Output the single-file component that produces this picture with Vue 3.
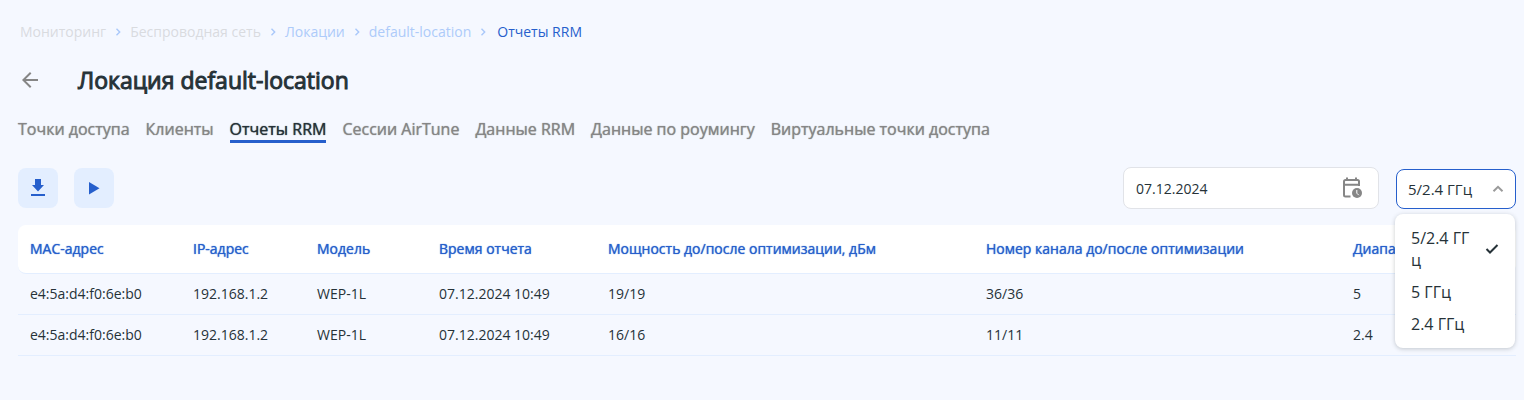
<script setup>
    import { ref } from "vue"
    const crumbs = [
        { title: 'Мониторинг', type: 'muted' },
        { title: 'Беспроводная сеть', type: 'muted' },
        { title: 'Локации', type: 'link' },
        { title: 'default-location', type: 'link' },
        { title: 'Отчеты RRM', type: 'current' },
    ]
    const tabs = ['Точки доступа', 'Клиенты', 'Отчеты RRM', 'Сессии AirTune', 'Данные RRM', 'Данные по роумингу', 'Виртуальные точки доступа']
    const activeTab = ref('Отчеты RRM')

    const columns = [
        { title: 'MAC-адрес', key: 'mac', width: 163 },
        { title: 'IP-адрес', key: 'ip', width: 124 },
        { title: 'Модель', key: 'model', width: 122 },
        { title: 'Время отчета', key: 'time', width: 169 },
        { title: 'Мощность до/после оптимизации, дБм', key: 'power', width: 378 },
        { title: 'Номер канала до/после оптимизации', key: 'channel', width: 367 },
        { title: 'Диапазон', key: 'band', width: 175 },
    ]
    const rows = [
        { mac: 'e4:5a:d4:f0:6e:b0', ip: '192.168.1.2', model: 'WEP-1L', time: '07.12.2024 10:49', power: '19/19', channel: '36/36', band: '5' },
        { mac: 'e4:5a:d4:f0:6e:b0', ip: '192.168.1.2', model: 'WEP-1L', time: '07.12.2024 10:49', power: '16/16', channel: '11/11', band: '2.4' },
    ]

    const date = ref('07.12.2024')
    const bands = ['5/2.4 ГГц', '5 ГГц', '2.4 ГГц']
    const band = ref('5/2.4 ГГц')
    const opened = ref(true)
    function selectBand(item) {
        band.value = item
        opened.value = false
    }
</script>

<template>
    <div class="page">
        <nav class="crumbs" aria-label="Навигация">
            <template v-for="(crumb, index) in crumbs" :key="crumb.title">
                <svg v-if="index > 0" class="chevron" viewBox="0 0 8 8">
                    <path d="M2.500 0.800 5.700 4 2.500 7.200" />
                </svg>
                <a href="#" class="crumb" :class="crumb.type">{{ crumb.title }}</a>
            </template>
        </nav>

        <header class="header">
            <button class="back" aria-label="Назад">
                <svg viewBox="0 0 24 24">
                    <path d="M20 11H7.83l5.59-5.59L12 4l-8 8 8 8 1.41-1.41L7.83 13H20v-2z" />
                </svg>
            </button>
            <h1 class="title">Локация default-location</h1>
        </header>

        <nav class="tabs">
            <a v-for="tab in tabs" :key="tab" href="#" class="tab" :class="{ active: tab === activeTab }"
                @click.prevent="activeTab = tab">{{ tab }}</a>
        </nav>

        <div class="toolbar">
            <button class="action" aria-label="Скачать">
                <svg viewBox="0 0 24 24">
                    <path d="M9 3h6v6h3l-6 6.500L6 9h3z" />
                    <path d="M5 18h14v2H5z" />
                </svg>
            </button>
            <button class="action" aria-label="Запустить">
                <svg viewBox="0 0 24 24">
                    <path d="M7 6v12.400L17.500 12.200z" />
                </svg>
            </button>
            <div class="filters">
                <label class="date">
                    <input v-model="date" type="text" aria-label="Дата">
                    <svg viewBox="0 0 24 24">
                        <path class="line" d="M10.500 20.500H5.500Q4 20.500 4 19V5.500Q4 4 5.500 4H17.500Q19 4 19 5.500V10M4 8.800H19M7 4V1.500M16 4V1.500" />
                        <circle cx="17" cy="17" r="5" />
                        <path class="hand" d="M16.800 14v3.200l2 2" />
                    </svg>
                </label>
                <div class="band">
                    <select v-model="band" aria-label="Диапазон" @mousedown.prevent="opened = !opened">
                        <option v-for="item in bands" :key="item">{{ item }}</option>
                    </select>
                    <svg class="arrow" viewBox="0 0 12 12">
                        <path d="M1.500 8.200 6 3.800l4.500 4.400" />
                    </svg>
                    <div v-if="opened" class="menu">
                        <button v-for="item in bands" :key="item" class="option" @click="selectBand(item)">
                            <span>{{ item }}</span>
                            <svg v-if="item === band" viewBox="0 0 14 14">
                                <path d="M1.500 7 5 10.500 12.500 3" />
                            </svg>
                        </button>
                    </div>
                </div>
            </div>
        </div>

        <table class="table">
            <colgroup>
                <col v-for="col in columns" :key="col.key" :style="{ width: col.width + 'px' }">
            </colgroup>
            <thead>
                <tr>
                    <th v-for="col in columns" :key="col.key">{{ col.title }}</th>
                </tr>
            </thead>
            <tbody>
                <tr v-for="(row, index) in rows" :key="index">
                    <td v-for="col in columns" :key="col.key">{{ row[col.key] }}</td>
                </tr>
            </tbody>
        </table>
    </div>
</template>

<style>
    body {
        background-color: #f5f8ff;
    }
</style>

<style scoped>
    .page {
        padding: 22px 8px 44px 18px;
        font-family: "Open Sans", "Noto Sans", sans-serif;
        font-size: 14px;
        line-height: 20px;
        color: #263238;
    }

    button,
    input,
    select {
        font: inherit;
        color: inherit;
        border: none;
        outline: none;
        margin: 0;
        padding: 0;
    }

    button {
        background: none;
        cursor: pointer;
    }

    a {
        text-decoration: none;
    }

    .crumbs {
        display: flex;
        align-items: center;
        gap: 8px;
        padding-left: 2px;
    }

    .crumb.muted {
        color: #d9dbdf;
    }

    .crumb.link {
        color: #adcbfa;
    }

    .crumb.current {
        color: #265fcc;
        padding-left: 2px;
    }

    .chevron {
        width: 8px;
        height: 8px;
        fill: none;
        stroke: #a9c8fa;
        stroke-width: 1.4;
    }

    .header {
        display: flex;
        align-items: center;
        gap: 48px;
        margin-top: 20px;
    }

    .back {
        width: 12px;
        height: 24px;
        display: flex;
    }

    .back svg {
        flex: none;
        width: 24px;
        height: 24px;
        fill: #868686;
    }

    .title {
        margin: 0;
        font-size: 23px;
        line-height: 36px;
        font-weight: 400;
        -webkit-text-stroke: 1px currentColor;
    }

    .tabs {
        display: flex;
        gap: 16px;
        margin-top: 18px;
        font-size: 16px;
        line-height: 22px;
    }

    .tab {
        padding-top: 2px;
        color: #868686;
        text-shadow: 0 0 1px currentColor;
        border-bottom: 3px solid transparent;
    }

    .tab.active {
        color: #263238;
        border-color: #265fcc;
    }

    .toolbar {
        display: flex;
        align-items: center;
        gap: 16px;
        margin-top: 24px;
    }

    .action {
        display: flex;
        align-items: center;
        justify-content: center;
        width: 40px;
        height: 40px;
        border-radius: 8px;
        background-color: #e3eeff;
    }

    .action svg {
        width: 24px;
        height: 24px;
        fill: #265fcc;
    }

    .filters {
        display: flex;
        align-items: center;
        gap: 17px;
        margin-left: auto;
    }

    .date {
        box-sizing: border-box;
        display: flex;
        align-items: center;
        width: 256px;
        height: 42px;
        padding: 0 14px 0 12px;
        border: 1px solid #e1e3e8;
        border-radius: 8px;
        background-color: #fff;
    }

    .date input {
        flex: 1;
        min-width: 0;
        padding-top: 2px;
        background: none;
    }

    .date svg {
        width: 24px;
        height: 24px;
        fill: #868686;
    }

    .date .line {
        fill: none;
        stroke: #868686;
        stroke-width: 2;
    }

    .date .hand {
        fill: none;
        stroke: #fff;
        stroke-width: 1;
    }

    .band {
        position: relative;
        width: 120px;
        margin-top: 2px;
    }

    .band select {
        appearance: none;
        display: block;
        width: 100%;
        height: 40px;
        padding: 0 32px 0 11px;
        border: 1px solid #265fcc;
        border-radius: 8px;
        background-color: #fff;
        font-size: 15px;
    }

    .arrow {
        position: absolute;
        top: 14px;
        right: 12px;
        width: 12px;
        height: 12px;
        fill: none;
        stroke: #9a9a9a;
        stroke-width: 2;
        pointer-events: none;
    }

    .menu {
        position: absolute;
        z-index: 1;
        top: 45px;
        left: -1px;
        right: 1px;
        padding: 8px 0;
        border-radius: 8px;
        background-color: #fff;
        box-shadow: 0 1px 4px rgba(38, 50, 56, 0.25);
    }

    .option {
        display: flex;
        align-items: center;
        justify-content: space-between;
        width: 100%;
        padding: 5px 16px;
        font-size: 16px;
        line-height: 22px;
        text-align: left;
    }

    .option span {
        min-width: 0;
        word-break: break-all;
    }

    .option svg {
        flex: none;
        width: 14px;
        height: 14px;
        margin-left: 12px;
        fill: none;
        stroke: #263238;
        stroke-width: 2;
    }

    .table {
        width: 100%;
        margin-top: 16px;
        table-layout: fixed;
        border-spacing: 0;
    }

    th,
    td {
        padding: 10px 12px;
        text-align: left;
        white-space: nowrap;
        border-bottom: 1px solid #e3eeff;
    }

    th {
        padding: 14px 12px;
        background-color: #fff;
        color: #265fcc;
        font-weight: 400;
        text-shadow: 0 0 1px currentColor;
    }

    th:first-child {
        border-radius: 8px 0 0 8px;
    }

    th:last-child {
        border-radius: 0 8px 8px 0;
    }
</style>
